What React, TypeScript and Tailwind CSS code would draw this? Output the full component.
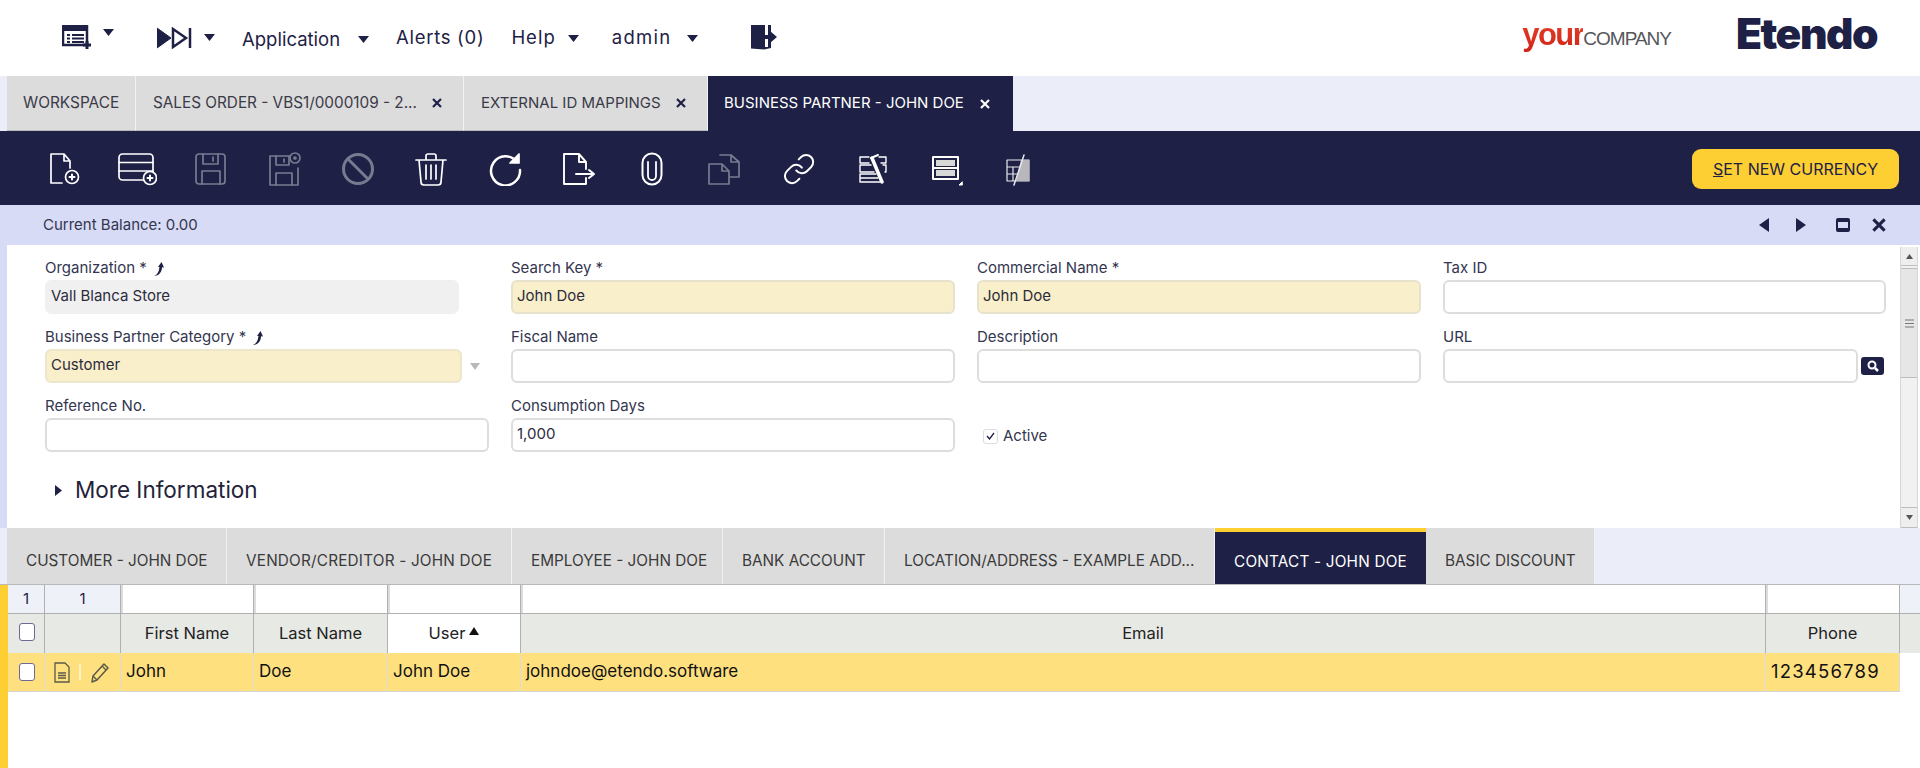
import React from "react";

const S = ({ children, o = 1, w = 34, h = 34 }: { children: React.ReactNode; o?: number; w?: number; h?: number }) => (
  <svg width={w} height={h} viewBox={`0 0 ${w} ${h}`} fill="none" stroke="#fff" strokeWidth={1.7} strokeLinejoin="round" strokeLinecap="round" opacity={o}>
    {children}
  </svg>
);

const Plus = ({ x, y }: { x: number; y: number }) => (
  <>
    <circle cx={x} cy={y} r={6.5} />
    <path d={`M${x - 2.5} ${y}h5M${x} ${y - 2.5}v5`} strokeWidth={2} />
  </>
);

const tools: { c: React.ReactNode }[] = [
  { c: <S><path d="M4 2h13l6 7v7M17 2v7h6M4 2v29h11" /><Plus x={25} y={25} /></S> },
  { c: <S w={40}><rect x="2" y="2" width="34" height="26" rx="3.500" /><path d="M2 10.500h34M2 19h34" /><circle cx="33" cy="26" r="6.500" fill="#1e2145" /><path d="M30.500 26h5M33 23.500v5" strokeWidth={2} /></S> },
  { c: <S o={0.4}><rect x="2" y="2" width="29" height="30" rx="3" /><path d="M9 2v10h15V2M19 5v4M8 32V19h18v13" /></S> },
  { c: <S o={0.4}><path d="M22 4H3v29h28V16" /><path d="M9 4v9h13V4M17 7v3M9 33V21h16v12" /><circle cx="28" cy="6" r="5" /><circle cx="28" cy="6" r="1" fill="#fff" /></S> },
  { c: <S o={0.4}><circle cx="17" cy="17" r="14.500" strokeWidth={3} /><path d="M7 7l20 20" strokeWidth={3} /></S> },
  { c: <S><path d="M2 8h30M12 8V4q0-2 2-2h6q2 0 2 2v4M5 8l2 22q0 3 3 3h14q3 0 3-3l2-22M12 13v14M17 13v14M22 13v14" /></S> },
  { c: <S><path d="M29 10A14.500 14.500 0 1 0 32 18" strokeWidth={2.5} /><path d="M31 2v9h-9z" fill="#fff" /></S> },
  { c: <S><path d="M3 2h15l7 8v7M18 2v8h7M3 2v30h22v-6" strokeWidth={1.900} /><path d="M15 22h17M28 18l5 4-5 4" strokeWidth={2} /></S> },
  { c: <S><path d="M7.500 11a9.500 9.500 0 0 1 19 0v12a9.500 9.500 0 0 1-19 0z" strokeWidth={2} /><path d="M13 10v14a4 4 0 0 0 8 0V10" strokeWidth={1.800} /></S> },
  { c: <S o={0.4}><path d="M1 12h13l7 7v13H1zM12 3h11l8 7v15H21M23 3v7h8M14 12v7h7" /></S> },
  {
    c: (
      <S>
        <g transform="scale(1.420)" strokeWidth={1.400}>
          <path d="M10 13a5 5 0 0 0 7.540.540l3-3a5 5 0 0 0-7.070-7.070l-1.720 1.710" />
          <path d="M14 11a5 5 0 0 0-7.540-.540l-3 3a5 5 0 0 0 7.070 7.070l1.710-1.710" />
        </g>
      </S>
    ),
  },
  { c: <S><path d="M14 5H5v6h9M24 5h7v6h-5M16 13H5v7h14M28 13h3v7h-1M21 22H5v8h20M5 26h18" strokeWidth={1.400} /><path d="M17 6l10 24" strokeWidth={3.500} /><path d="M23 3l-7 3 3 4" strokeWidth={2} /></S> },
  { c: <S><rect x="4" y="5" width="25" height="22" strokeWidth={2} /><path d="M4 16h25" strokeWidth={2} /><rect x="7" y="8" width="19" height="6" fill="#d8d8d8" stroke="none" /><rect x="7" y="18" width="19" height="6" fill="#d8d8d8" stroke="none" /><path d="M33 33h-3l3-3z" fill="#fff" strokeWidth={1} /></S> },
  { c: <S o={0.9}><path d="M27 8H5v21h22V8M5 15h12M5 22h10M11 15v14" strokeWidth={1.200} /><path d="M19 8h8v21H14z" fill="#c9c9c9" stroke="none" /><path d="M22 3L12 33" strokeWidth={1.500} /></S> },
];

const Caret = ({ cls = "" }: { cls?: string }) => (
  <svg width="11" height="7" viewBox="0 0 11 7" className={cls}><path d="M0 0h11L5.500 7z" fill="#1e2145" /></svg>
);

const Key = () => (
  <svg width="12" height="16" viewBox="0 0 12 16" className="ml-[6px]"><path d="M1 15C4 14 6 11 6.500 6L5 6 8.500 1 11 6.500 9 6.300C9 11 6 15 1 15Z" fill="#1e2145" /></svg>
);

const Field = ({ label, value = "", req, extra, cls = "w-[444px] border-[#dddddd] bg-white", icon }: { label: string; value?: string; req?: boolean; extra?: React.ReactNode; cls?: string; icon?: boolean }) => (
  <div>
    <div className="h-[23px] flex items-center text-[15px] text-[#33364f]">
      {label}{req ? " *" : ""}{icon ? <Key /> : null}
    </div>
    <div className="flex items-center">
      <div className={`h-[34px] rounded-[6px] border-2 flex items-center pl-[4px] pb-[1px] text-[15px] text-[#2c2c3c] ${cls}`}>{value}</div>
      {extra}
    </div>
  </div>
);

const tabsTop = [
  { t: "WORKSPACE", w: "w-[129px]", f: "text-[15.400px] pl-[16px]" },
  { t: "SALES ORDER - VBS1/0000109 - 2...", w: "w-[328px]", f: "text-[15.300px] pl-[17px]", x: true },
  { t: "EXTERNAL ID MAPPINGS", w: "w-[244px]", f: "text-[15px] pl-[17px]", x: true },
];

const X = ({ c = "#1e2145", s = 10 }: { c?: string; s?: number }) => (
  <svg width={s} height={s} viewBox="0 0 10 10"><path d="M1 1l8 8M9 1l-8 8" stroke={c} strokeWidth={2.200} /></svg>
);

const lowerTabs = [
  { t: "CUSTOMER - JOHN DOE", w: "w-[220px]" },
  { t: "VENDOR/CREDITOR - JOHN DOE", w: "w-[285px]", f: "tracking-[0.200px]" },
  { t: "EMPLOYEE - JOHN DOE", w: "w-[211px]" },
  { t: "BANK ACCOUNT", w: "w-[162px]" },
  { t: "LOCATION/ADDRESS - EXAMPLE ADD...", w: "w-[330px]" },
  { t: "CONTACT - JOHN DOE", w: "w-[211px]", a: true },
  { t: "BASIC DISCOUNT", w: "w-[169px]" },
];

const cols = ["w-[133px]", "w-[134px]", "w-[133px]", "flex-1", "w-[134px]"];
const heads = ["First Name", "Last Name", "User", "Email", "Phone"];
const cells = ["John", "Doe", "John Doe", "johndoe@etendo.software", "123456789"];

export default function App() {
  return (
    <div className="w-[1920px] h-[768px] overflow-hidden bg-white flex flex-col font-['Inter',sans-serif] text-[#1e2145]">
      {/* top bar */}
      <div className="h-[76px] flex items-center relative">
        <div className="flex items-center ml-[62px]">
          <svg width="30" height="26" viewBox="0 0 30 26">
            <path d="M1 1h24v19H1z" fill="#fff" stroke="#1e2145" strokeWidth="2.500" />
            <path d="M1 1h24v5H1z" fill="#1e2145" />
            <path d="M5 10h3M5 13.500h3M5 17h3M10 10h12M10 13.500h12M10 17h12" stroke="#1e2145" strokeWidth="1.800" />
            <path d="M25 16v8M21 20h8" stroke="#1e2145" strokeWidth="3" />
          </svg>
          <Caret cls="ml-[11px] -mt-[12px]" />
        </div>
        <div className="flex items-center ml-[43px]">
          <svg width="36" height="22" viewBox="0 0 36 22">
            <path d="M0 1l14 10L0 21z" fill="#1e2145" stroke="#1e2145" strokeWidth="1" />
            <path d="M16 2l13 9-13 9z" fill="#fff" stroke="#1e2145" strokeWidth="2.500" />
            <path d="M33 1v20" stroke="#1e2145" strokeWidth="2.500" />
          </svg>
          <Caret cls="ml-[11px] -mt-[1px]" />
        </div>
        <span className="ml-[27px] text-[18.500px] mt-[3px]">Application</span>
        <Caret cls="ml-[18px] mt-[3px]" />
        <span className="ml-[27px] text-[18.500px] tracking-[0.700px]">Alerts (0)</span>
        <span className="ml-[27px] text-[18.500px] tracking-[1px]">Help</span>
        <Caret cls="ml-[12px]" />
        <span className="ml-[33px] text-[18.500px] tracking-[1.300px]">admin</span>
        <Caret cls="ml-[15px]" />
        <svg width="27" height="26" viewBox="0 0 27 26" className="ml-[53px] -mt-[3px]">
          <path d="M0 1l20 0v23l-7 1.500-13-1z" fill="#1e2145" />
          <path d="M14 1v10h3v-10zM14 15h3v8h-3z" fill="#fff" />
          <path d="M13 11h6V7l7 6-7 6v-4h-6z" fill="#1e2145" />
        </svg>
        <div className="ml-auto flex items-center font-['Liberation_Sans',sans-serif] mr-[43px]">
          <span className="flex items-baseline mr-[65px] -mt-[6px]">
            <span className="text-[31px] font-bold text-transparent bg-clip-text bg-gradient-to-b from-[#e8452e] to-[#cf1a10] tracking-[-1.500px]">your</span>
            <span className="text-[19px] text-[#55565a] tracking-[-1px]">COMPANY</span>
          </span>
          <span className="text-[42.500px] leading-none font-black font-['Inter',sans-serif] text-[#1e2145] tracking-[-1.500px] -mt-[8px]">Etendo</span>
        </div>
      </div>

      {/* document tabs */}
      <div className="h-[55px] bg-[#ebeef8] flex pl-[7px]">
        {tabsTop.map((t) => (
          <div key={t.t} className={`${t.w} ${t.f} bg-[#dcdcdc] border-r border-[#f2f2f2] border-b border-b-[#b8b8b8] flex items-center gap-[15px] text-[#3a3a48]`}>
            <span className="whitespace-nowrap">{t.t}</span>
            {t.x ? <X /> : null}
          </div>
        ))}
        <div className="w-[305px] bg-[#1e2145] flex items-center pl-[16px] gap-[16px] text-[15px] text-white">
          <span className="whitespace-nowrap">BUSINESS PARTNER - JOHN DOE</span>
          <X c="#fff" />
        </div>
      </div>

      {/* toolbar */}
      <div className="h-[74px] bg-[#1e2145] flex items-center pl-[27px] pr-[21px] pt-[2px]">
        {tools.map((t, i) => (
          <div key={i} className="w-[73.500px] h-[34px] flex items-center justify-center">{t.c}</div>
        ))}
        <button className="ml-auto w-[207px] h-[40px] rounded-[9px] bg-[#fdcf33] text-[#1e2145] text-[16px] flex items-center justify-center">
          <span><span className="underline">S</span>ET NEW CURRENCY</span>
        </button>
      </div>

      {/* form area */}
      <div className="h-[323px] flex flex-col border-l-[7px] border-[#d8dbf5]">
        <div className="h-[40px] bg-[#d8dbf5] flex items-center pl-[36px] pr-[34px] text-[15px] text-[#33364f]">
          Current Balance: 0.00
          <div className="ml-auto flex items-center">
            <svg width="12" height="14" viewBox="0 0 12 14"><path d="M11 0v14L1 7z" fill="#1e2145" /></svg>
            <svg width="12" height="14" viewBox="0 0 12 14" className="ml-[25px]"><path d="M1 0v14l10-7z" fill="#1e2145" /></svg>
            <svg width="16" height="16" viewBox="0 0 16 16" className="ml-[28px]"><path d="M3 1h10q2 0 2 2v10q0 2-2 2H3q-2 0-2-2V3q0-2 2-2z" fill="#1e2145" /><rect x="3" y="5" width="10" height="6" fill="#d8dbf5" /></svg>
            <span className="ml-[21px]"><X s={14} /></span>
          </div>
        </div>
        <div className="flex-1 flex min-h-0">
          <div className="flex-1 pl-[38px] pt-[12px]">
            <div className="grid grid-cols-[repeat(4,444px)] gap-x-[22px] gap-y-[12px]">
              <Field label="Organization" req icon value="Vall Blanca Store" cls="w-[414px] border-[#f0f0f0] bg-[#f0f0f0]" />
              <Field label="Search Key" req value="John Doe" cls="w-[444px] border-[#e6e2cc] bg-[#f9efca]" />
              <Field label="Commercial Name" req value="John Doe" cls="w-[444px] border-[#e6e2cc] bg-[#f9efca]" />
              <Field label="Tax ID" cls="w-[443px] border-[#dddddd] bg-white" />
              <Field
                label="Business Partner Category"
                req
                icon
                value="Customer"
                cls="w-[417px] border-[#ece6cc] bg-[#f9efca]"
                extra={
                  <svg width="10" height="7" viewBox="0 0 10 7" className="ml-[8px]"><path d="M0 0h10L5 7z" fill="#b8b8b8" /></svg>
                }
              />
              <Field label="Fiscal Name" />
              <Field label="Description" />
              <Field
                label="URL"
                cls="w-[415px] border-[#dddddd] bg-white"
                extra={
                  <div className="ml-[3px] w-[23px] h-[18px] bg-[#1e2145] rounded-[3px] flex items-center justify-center">
                    <svg width="12" height="12" viewBox="0 0 12 12" fill="none"><circle cx="5" cy="5" r="3.500" stroke="#fff" strokeWidth="2" /><path d="M8 8l3 3" stroke="#fff" strokeWidth="2.500" /></svg>
                  </div>
                }
              />
              <Field label="Reference No." />
              <Field label="Consumption Days" value="1,000" />
              <div className="pt-[25px] pl-[6px] flex items-center gap-[5px] text-[15px] text-[#33364f]">
                <div className="w-[15px] h-[15px] rounded-[3px] border border-[#dddddd] flex items-center justify-center">
                  <svg width="9" height="8" viewBox="0 0 9 8" fill="none"><path d="M1 4l2.500 3L8 1" stroke="#1e2145" strokeWidth="1.300" /></svg>
                </div>
                Active
              </div>
            </div>
            <div className="mt-[25px] ml-[10px] h-[26px] flex items-center gap-[13px] text-[22.500px] text-[#23233a]">
              <svg width="7" height="11" viewBox="0 0 7 11"><path d="M0 0l7 5.500L0 11z" fill="#1e2145" /></svg>
              More Information
            </div>
          </div>
          {/* scrollbar */}
          <div className="w-[18px] mr-[2px] mt-[2px] flex flex-col bg-[#f1f1f1] border-x border-[#d6d6d6]">
            <div className="h-[19px] bg-[#eeeeee] border-b border-[#bdbdbd] flex items-center justify-center">
              <svg width="7" height="5" viewBox="0 0 7 5"><path d="M0 5h7L3.500 0z" fill="#555" /></svg>
            </div>
            <div className="mt-[2px] h-[110px] bg-[#e6e6e6] border-y border-[#bdbdbd] flex items-center justify-center">
              <svg width="9" height="9" viewBox="0 0 9 9"><path d="M0 1h9M0 4.500h9M0 8h9" stroke="#777" strokeWidth="1" /></svg>
            </div>
            <div className="mt-auto h-[21px] bg-[#eeeeee] border-y border-[#bdbdbd] flex items-center justify-center">
              <svg width="7" height="5" viewBox="0 0 7 5"><path d="M0 0h7L3.500 5z" fill="#555" /></svg>
            </div>
          </div>
        </div>
      </div>

      {/* lower tabs */}
      <div className="h-[57px] bg-[#ebeef8] flex pl-[7px] border-b border-[#b8b8b8]">
        {lowerTabs.map((t) =>
          t.a ? (
            <div key={t.t} className={`${t.w} bg-[#1e2145] border-t-4 border-[#fdcf33] flex items-center justify-center pt-[8px] text-[15.300px] tracking-[0.200px] text-white`}>
              {t.t}
            </div>
          ) : (
            <div key={t.t} className={`${t.w} ${t.f ?? ""} bg-[#dcdcdc] border-r border-[#f2f2f2] flex items-center pl-[19px] pt-[11px] text-[15.300px] text-[#3a3a3a] whitespace-nowrap`}>
              {t.t}
            </div>
          )
        )}
      </div>

      {/* grid */}
      <div className="flex-1 flex border-l-[8px] border-[#fdcf33] min-h-0">
        <div className="flex-1 flex flex-col min-w-0">
          <div className="h-[29px] flex border-b border-[#b0b0b0] bg-[#eff1f8]">
            <div className="w-[37px] border-r border-[#b0b0b0] flex items-center justify-center text-[15px]">1</div>
            <div className="w-[76px] border-r border-[#b0b0b0] flex items-center justify-center text-[15px]">1</div>
            {cols.map((c, i) => (
              <div key={i} className={`${c} bg-white border-l-2 border-l-[#dcdcdc] border-r border-[#b0b0b0]`} />
            ))}
            <div className="w-[20px]" />
          </div>
          <div className="h-[39px] flex bg-[#e7e9e4] text-[16.500px] text-[#222]">
            <div className="w-[37px] border-r border-[#b0b0b0] flex items-center justify-center pl-[1px] pb-[3px]">
              <div className="w-[16px] h-[18px] rounded-[3px] border border-[#6a6c95] bg-white" />
            </div>
            <div className="w-[76px] border-r border-[#b0b0b0]" />
            {heads.map((h, i) => (
              <div key={h} className={`${cols[i]} border-r border-[#b0b0b0] flex items-center justify-center ${h === "User" ? "bg-white" : ""}`}>
                {h}
                {h === "User" ? (
                  <svg width="10" height="8" viewBox="0 0 10 8" className="ml-[4px] -mt-[5px]"><path d="M0 8h10L5 0z" fill="#111" /></svg>
                ) : null}
              </div>
            ))}
            <div className="w-[20px]" />
          </div>
          <div className="flex mr-[20px] h-[39px] bg-[#ffe07f] border-b border-[#d5d5d5] text-[17px] text-[#111]">
            <div className="w-[37px] border-r border-[#dcdcdc] flex items-center justify-center pl-[1px]">
              <div className="w-[16px] h-[18px] rounded-[3px] border border-[#6a6c95] bg-white" />
            </div>
            <div className="w-[76px] border-r border-[#dcdcdc] flex items-center pl-[9px]">
              <svg width="16" height="21" viewBox="0 0 16 21" fill="none">
                <path d="M1 1h10l4 4v15H1z" stroke="#5a5a48" strokeWidth="1.300" />
                <path d="M4 11h8M4 13.500h8M4 16h8" stroke="#5a5a48" strokeWidth="1.300" />
              </svg>
              <div className="w-[2px] h-[16px] bg-[#fff2c4] ml-[9px]" />
              <svg width="20" height="21" viewBox="0 0 20 21" fill="none" className="ml-[9px]">
                <path d="M14 2l4 4L7 18l-5 2 1-6z" stroke="#5a5a48" strokeWidth="1.500" strokeLinejoin="round" />
                <path d="M3 14l4 4M12 4l4 4" stroke="#5a5a48" strokeWidth="1.300" />
              </svg>
            </div>
            {cells.map((c, i) => (
              <div key={c} className={`${cols[i]} border-r border-[#dcdcdc] flex items-center pl-[5px] ${c === "123456789" ? "text-[18.500px] tracking-[1.200px]" : ""}`}>{c}</div>
            ))}
          </div>
        </div>
      </div>
    </div>
  );
}
